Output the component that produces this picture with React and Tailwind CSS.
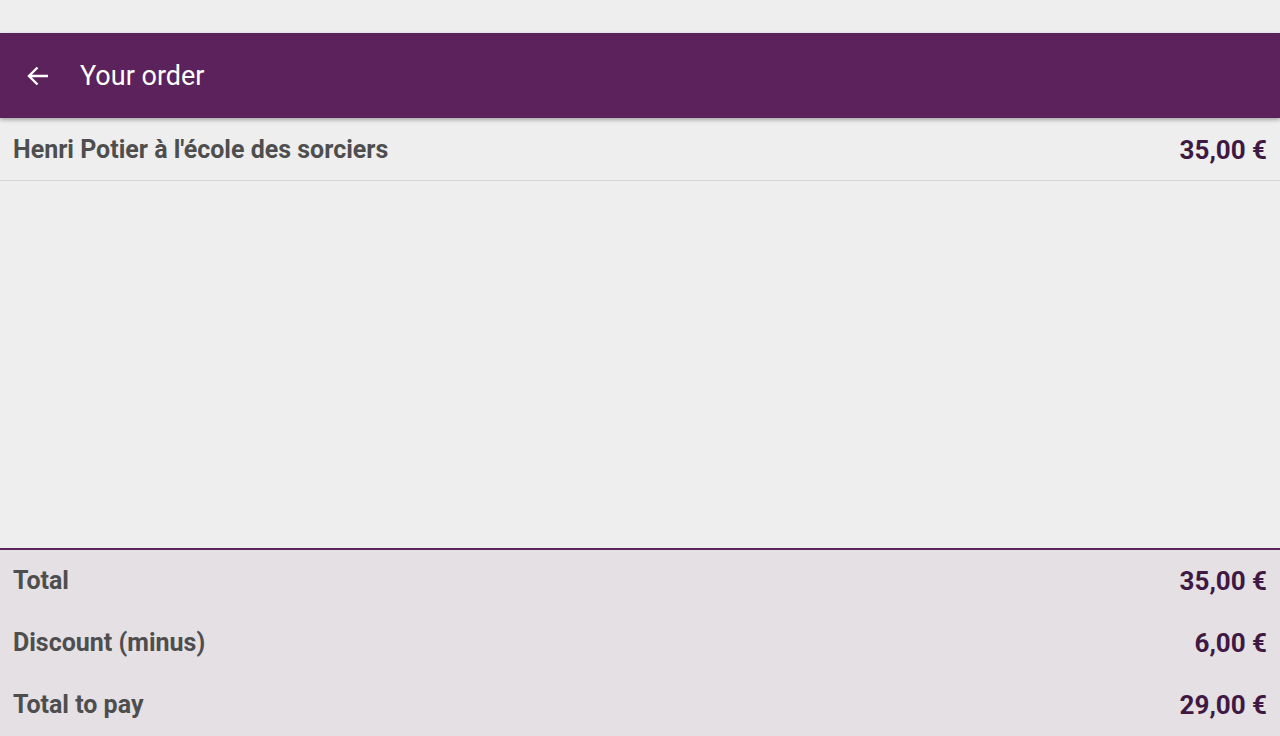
export default function App() {
  const lines = [
    { label: "Total", amount: "35,00 €" },
    { label: "Discount (minus)", amount: "6,00 €" },
    { label: "Total to pay", amount: "29,00 €" },
  ];

  return (
    <div
      className="h-screen flex flex-col bg-[#eeeeee] overflow-hidden"
      style={{ fontFamily: "Roboto, 'Noto Sans', sans-serif" }}
    >
      {/* status bar gap */}
      <div className="h-[33px] shrink-0" />

      <header className="h-[85px] shrink-0 flex items-center bg-[#5c225c] shadow-[0_2px_4px_rgba(0,0,0,0.3)] relative z-10">
        <button className="w-[80px] h-full flex items-center pl-[26px] text-white">
          <svg width="24" height="24" viewBox="0 0 24 24" fill="none">
            <path d="M22 12H3.5M11.5 3.5L3 12l8.5 8.5" stroke="white" strokeWidth="2.4" />
          </svg>
        </button>
        <h1 className="text-[27px] text-white font-normal pt-[2px]">Your order</h1>
      </header>

      <div className="h-[63px] shrink-0 flex items-center justify-between px-[13px] border-b border-[#d8d8d8]">
        <span className="text-[25px] font-bold text-[#4e4e4e] pt-[2px]">
          Henri Potier à l'école des sorciers
        </span>
        <span className="text-[26px] font-bold text-[#3f1843] pt-[2px]">35,00 €</span>
      </div>

      <div className="flex-1" />

      <div className="shrink-0 bg-[#e5e0e4] border-t-2 border-[#5c225c]">
        {lines.map((l) => (
          <div key={l.label} className="h-[62px] flex items-center justify-between px-[13px]">
            <span className="text-[25px] font-bold text-[#4e4e4e]">{l.label}</span>
            <span className="text-[26px] font-bold text-[#3f1843]">{l.amount}</span>
          </div>
        ))}
      </div>
    </div>
  );
}
